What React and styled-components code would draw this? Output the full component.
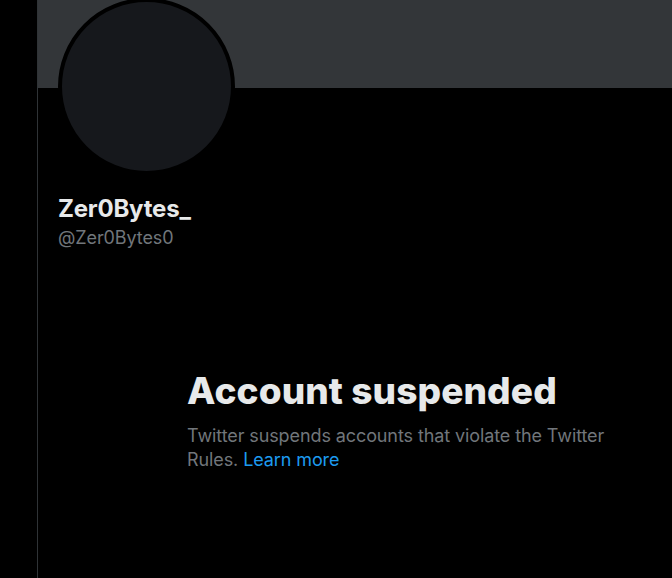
import React from "react";
import styled, { createGlobalStyle } from "styled-components";

const GlobalStyle = createGlobalStyle`
  html, body {
    margin: 0;
    padding: 0;
    background: #000;
    overflow: hidden;
  }
  body {
    font-family: Inter, "Liberation Sans", Arial, sans-serif;
    -webkit-font-smoothing: antialiased;
  }
`;

const Page = styled.div`
  display: flex;
  min-height: 100vh;
  background: #000;
`;

const Sidebar = styled.div`
  width: 37px;
  flex: none;
  border-right: 1px solid #2f3336;
`;

const Main = styled.main`
  flex: 1;
  min-width: 0;
  overflow: hidden;
`;

const Banner = styled.div`
  height: 88px;
  background: #333639;
`;

const ProfileInfo = styled.div`
  padding: 0 20px;
`;

const Avatar = styled.div`
  box-sizing: border-box;
  width: 177px;
  height: 177px;
  margin-top: -90px;
  border: 4px solid #000;
  border-radius: 50%;
  background: #16181c;
`;

const Name = styled.div`
  margin-top: 20px;
  font-size: 24px;
  line-height: 28px;
  font-weight: 700;
  color: #e7e9ea;
  letter-spacing: -0.2px;
`;

const Handle = styled.div`
  margin-top: 3px;
  font-size: 18px;
  line-height: 24px;
  color: #71767b;
  letter-spacing: -0.1px;
`;

const EmptyState = styled.section`
  margin: 119px 0 0 129px;
  width: 440px;
`;

const Title = styled.h1`
  margin: 0;
  font-size: 37px;
  line-height: 44px;
  font-weight: 800;
  color: #e7e9ea;
  letter-spacing: 0.1px;
`;

const Body = styled.p`
  margin: 11px 0 0;
  font-size: 18px;
  line-height: 24px;
  color: #71767b;
  letter-spacing: -0.1px;
`;

const Link = styled.a`
  color: #1d9bf0;
  text-decoration: none;
`;

export default function App() {
  return (
    <>
      <GlobalStyle />
      <Page>
        <Sidebar />
        <Main>
          <Banner />
          <ProfileInfo>
            <Avatar />
            <Name>Zer0Bytes_</Name>
            <Handle>@Zer0Bytes0</Handle>
            <EmptyState>
              <Title>Account suspended</Title>
              <Body>
                Twitter suspends accounts that violate the Twitter Rules.{" "}
                <Link href="#">Learn more</Link>
              </Body>
            </EmptyState>
          </ProfileInfo>
        </Main>
      </Page>
    </>
  );
}
